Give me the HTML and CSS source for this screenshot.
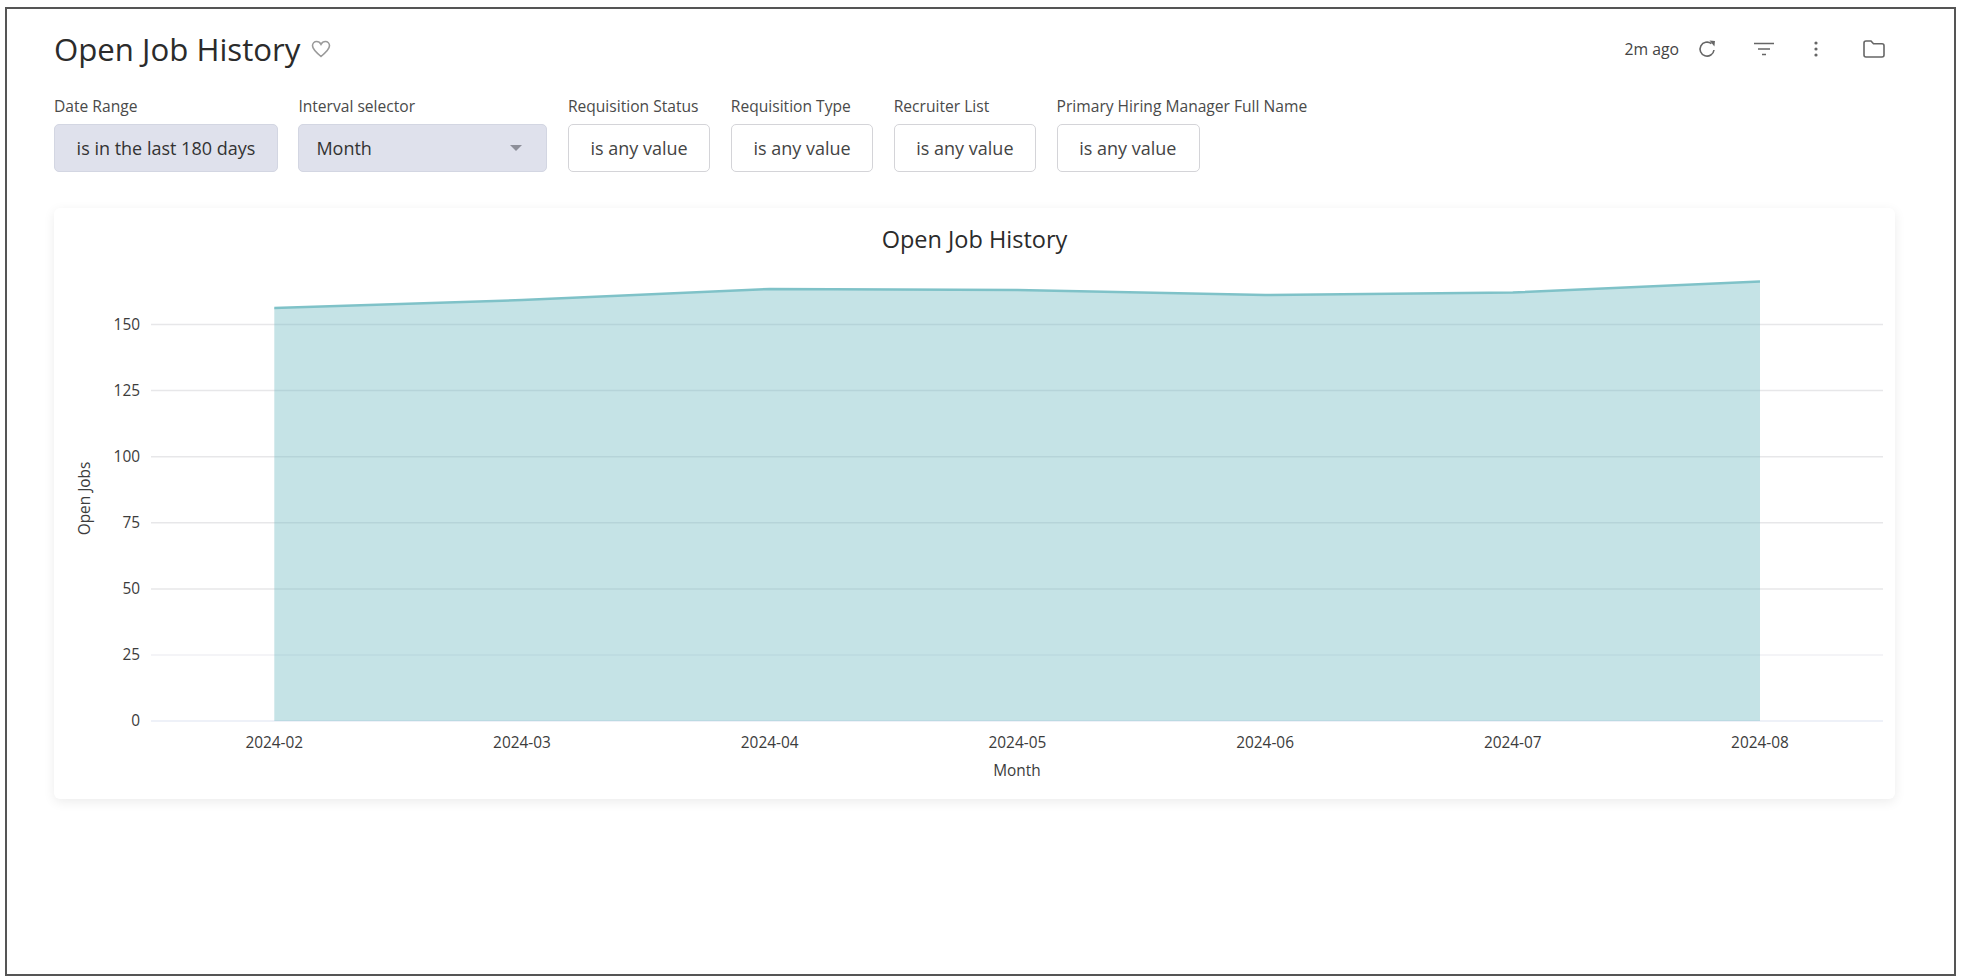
FILE: index.html
```html
<!DOCTYPE html>
<html lang="en">
<head>
    <meta charset="UTF-8">
    <meta name="viewport" content="width=device-width, initial-scale=1.0">
    <title>Open Job History</title>
    <link rel="stylesheet" href="styles.css">
</head>
<body>

    <div class="frame">
        <header class="page-header">
            <div class="title-group">
                <h1>Open Job History</h1>
                <svg class="icon heart" viewBox="0 0 20 18" width="20" height="18">
                    <path d="M10 16.5 C4 11.5 1.5 9 1.5 5.8 C1.5 3.4 3.3 1.5 5.6 1.5 C7.4 1.5 9 2.5 10 4.4 C11 2.5 12.6 1.5 14.4 1.5 C16.7 1.5 18.5 3.4 18.5 5.8 C18.5 9 16 11.5 10 16.5 Z"/>
                </svg>
            </div>
            <div class="toolbar">
                <span class="updated">2m ago</span>
                <svg class="icon refresh" viewBox="0 0 18 18" width="18" height="18">
                    <path d="M16 10 A7 7 0 1 1 13.4 3.6"/>
                    <path class="solid" d="M11.5 0.6 L17 1 L16.4 6.6 Z"/>
                </svg>
                <svg class="icon filter" viewBox="0 0 20 14" width="20" height="14">
                    <path d="M0 1.5 H20 M4 7 H16 M8 12.5 H12"/>
                </svg>
                <svg class="icon dots" viewBox="0 0 4 16" width="4" height="16">
                    <circle class="solid" cx="2" cy="2" r="1.6"/>
                    <circle class="solid" cx="2" cy="8" r="1.6"/>
                    <circle class="solid" cx="2" cy="14" r="1.6"/>
                </svg>
                <svg class="icon folder" viewBox="0 0 22 18" width="22" height="18">
                    <path d="M1 3 Q1 1 3 1 H8 L10.5 3.8 H19 Q21 3.8 21 5.8 V15 Q21 17 19 17 H3 Q1 17 1 15 Z"/>
                </svg>
            </div>
        </header>

        <div class="filters">
            <div class="filter-item">
                <label>Date Range</label>
                <div class="filter-box active date-box">is in the last 180 days</div>
            </div>
            <div class="filter-item">
                <label>Interval selector</label>
                <div class="filter-box active select-box">
                    <span>Month</span>
                    <span class="arrow"></span>
                </div>
            </div>
            <div class="filter-item">
                <label>Requisition Status</label>
                <div class="filter-box">is any value</div>
            </div>
            <div class="filter-item">
                <label>Requisition Type</label>
                <div class="filter-box">is any value</div>
            </div>
            <div class="filter-item">
                <label>Recruiter List</label>
                <div class="filter-box">is any value</div>
            </div>
            <div class="filter-item wide-label">
                <label>Primary Hiring Manager Full Name</label>
                <div class="filter-box">is any value</div>
            </div>
        </div>

        <section class="chart-card">
            <h2>Open Job History</h2>
            <svg class="chart" viewBox="0 0 1841 545" width="1841" height="545">
                <!-- grid -->
                <g class="grid">
                    <line x1="97" x2="1829" y1="70.5" y2="70.5"/>
                    <line x1="97" x2="1829" y1="136.6" y2="136.6"/>
                    <line x1="97" x2="1829" y1="202.7" y2="202.7"/>
                    <line x1="97" x2="1829" y1="268.8" y2="268.8"/>
                    <line x1="97" x2="1829" y1="334.9" y2="334.9"/>
                    <line class="light" x1="97" x2="1829" y1="401" y2="401"/>
                    <line class="base" x1="97" x2="1829" y1="467" y2="467"/>
                </g>

                <!-- area -->
                <path class="area" d="M220.3 54 L468 46 L715.7 35 L963.4 36 L1211.1 41 L1458.8 38.5 L1706 27.5 L1706 467 L220.3 467 Z"/>
                <path class="area-line" d="M220.3 54 L468 46 L715.7 35 L963.4 36 L1211.1 41 L1458.8 38.5 L1706 27.5"/>

                <!-- y axis -->
                <g class="tick y-tick">
                    <text x="86" y="76">150</text>
                    <text x="86" y="142">125</text>
                    <text x="86" y="208">100</text>
                    <text x="86" y="274">75</text>
                    <text x="86" y="340">50</text>
                    <text x="86" y="406">25</text>
                    <text x="86" y="472">0</text>
                </g>

                <!-- x axis -->
                <g class="tick x-tick">
                    <text x="220.3" y="494">2024-02</text>
                    <text x="468" y="494">2024-03</text>
                    <text x="715.7" y="494">2024-04</text>
                    <text x="963.4" y="494">2024-05</text>
                    <text x="1211.1" y="494">2024-06</text>
                    <text x="1458.8" y="494">2024-07</text>
                    <text x="1706" y="494">2024-08</text>
                </g>

                <text class="axis-title" x="963" y="522">Month</text>
                <text class="axis-title" transform="translate(36 244.5) rotate(-90)">Open Jobs</text>
            </svg>
        </section>
    </div>

</body>
</html>
```

FILE: styles.css
```css
/* Global Style */
* {
    box-sizing: border-box;
}

body {
    margin: 0;
    background-color: #fff;
    color: #333;
    font-family: 'Open Sans', sans-serif;
}

.frame {
    margin: 7px 6px 4px 5px;
    height: 969px;
    padding: 0 57px 0 47px;
    border: 2px solid #555;
    background-color: #fff;
}

/* Header */
.page-header {
    display: flex;
    justify-content: space-between;
    align-items: center;
    height: 80px;
}

.title-group {
    display: flex;
    align-items: center;
    gap: 11px;
}

h1 {
    margin: 0;
    font-size: 31.2px;
    font-weight: 400;
    color: #2b2b2b;
}

.icon {
    fill: none;
    stroke: #666;
    stroke-width: 1.6;
}

.icon .solid {
    fill: #666;
    stroke: none;
}

.heart {
    stroke: #9a9a9a;
}

.toolbar {
    display: flex;
    align-items: center;
    margin-right: 12px;
}

.updated {
    font-size: 15.8px;
    color: #444;
    margin-right: 19px;
}

.refresh {
    margin-right: 38px;
}

.filter {
    margin-right: 40px;
}

.dots {
    margin-right: 45px;
}

/* Filters */
.filters {
    display: flex;
    gap: 20.5px;
    margin-top: 7px;
}

.filter-item {
    display: flex;
    flex-direction: column;
    gap: 8px;
}

.filter-item label {
    font-size: 15.6px;
    line-height: 20px;
    color: #4a4a4a;
    white-space: nowrap;
}

.wide-label {
    width: 143px;
}

.filter-box {
    display: flex;
    align-items: center;
    height: 48px;
    padding: 0 21.6px;
    border: 1px solid #d4d4d8;
    border-radius: 5px;
    font-size: 18px;
    color: #444;
    white-space: nowrap;
}

.filter-box.active {
    background-color: #dfe1ec;
    border-color: #d3d6e2;
    color: #333;
}

.select-box {
    justify-content: space-between;
    width: 249px;
    padding: 0 24px 0 17px;
}

.arrow {
    width: 0;
    height: 0;
    border-left: 6px solid transparent;
    border-right: 6px solid transparent;
    border-top: 6px solid #8d8f99;
}

/* Chart card */
.chart-card {
    width: 1841px;
    height: 591px;
    margin-top: 36px;
    padding-top: 16px;
    background-color: #fff;
    border-radius: 6px;
    box-shadow: 0 3px 12px rgba(0, 0, 0, 0.08);
}

.chart-card h2 {
    margin: 0;
    height: 30px;
    font-size: 23.5px;
    line-height: 30px;
    font-weight: 400;
    text-align: center;
    color: #2b2b2b;
}

.chart {
    display: block;
}

.grid line {
    stroke: #e7e7e9;
    stroke-width: 1.5;
}

.grid .light {
    stroke: #f0f1f4;
}

.grid .base {
    stroke: #e8edf6;
}

.area {
    fill: #6eb9c0;
    fill-opacity: 0.4;
}

.area-line {
    fill: none;
    stroke: #7fc2c8;
    stroke-width: 2.5;
}

.tick text,
.axis-title {
    font-family: 'Open Sans', sans-serif;
    font-size: 15.4px;
    fill: #3c3c3c;
}

.y-tick text {
    text-anchor: end;
}

.x-tick text,
.axis-title {
    text-anchor: middle;
}
```
